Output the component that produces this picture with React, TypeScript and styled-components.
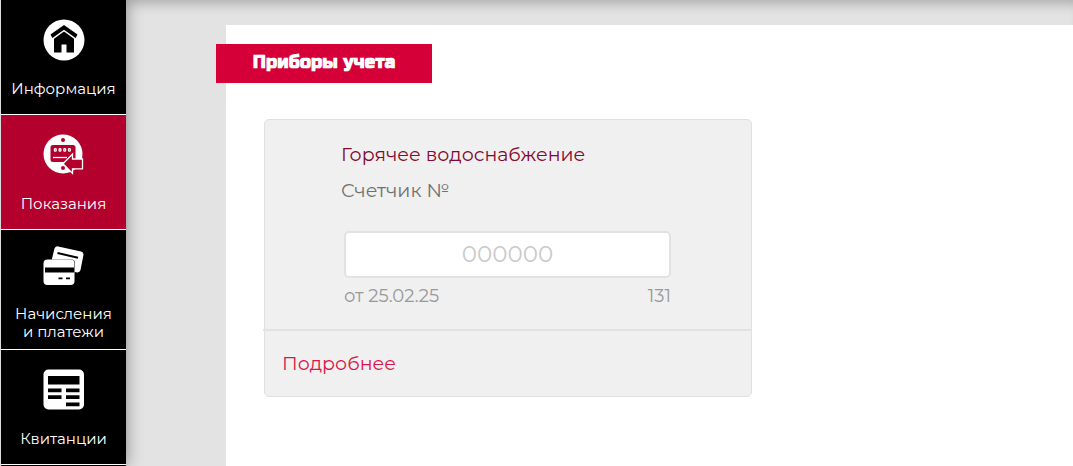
import React from "react";
import styled, { createGlobalStyle, css } from "styled-components";

const GlobalStyle = createGlobalStyle`
  *, *::before, *::after { box-sizing: border-box; }
  body {
    margin: 0;
    background: #e3e3e3;
    font-family: Montserrat, Inter, "Open Sans", sans-serif;
  }
`;

const Page = styled.div`
  display: flex;
  min-height: 100vh;
  overflow: hidden;
`;

const Sidebar = styled.nav`
  flex: none;
  width: 126px;
  border-left: 1px solid #dcdcdc;
  background: #000;
  box-shadow: 0 0 16px rgba(0, 0, 0, 0.4);
`;

const NavItem = styled.a<{ $active?: boolean; $tall?: boolean }>`
  display: flex;
  flex-direction: column;
  align-items: center;
  gap: 19px;
  padding: 19px 4px 16px;
  border-bottom: 1px solid #fff;
  background: ${(p) => (p.$active ? "#b3002d" : "#000")};
  color: #fff;
  font-size: 15px;
  line-height: 18px;
  text-align: center;
  text-decoration: none;
  white-space: pre-line;
  ${(p) =>
    p.$tall &&
    css`
      gap: 18px;
      padding: 15px 4px 8px;
    `}
`;

const Icon = styled.svg`
  display: block;
  width: 42px;
  height: 42px;
`;

const Main = styled.main`
  flex: 1;
  display: flex;
  min-width: 0;
  padding: 25px 0 0 100px;
  box-shadow: inset 0 12px 12px -8px rgba(0, 0, 0, 0.24);
`;

const Panel = styled.section`
  flex: 1;
  padding: 19px 38px 40px;
  background: #fff;
`;

const Title = styled.h1`
  width: 216px;
  margin: 0 0 36px -48px;
  background: #d50037;
  color: #fff;
  font-family: "Russo One", "Open Sans", sans-serif;
  font-size: 18px;
  font-weight: 700;
  line-height: 37px;
  padding-bottom: 2px;
  text-align: center;
`;

const Card = styled.article`
  max-width: 488px;
  border: 1px solid #e0e0e0;
  border-radius: 5px;
  background: #f0f0f0;
`;

const CardBody = styled.div`
  padding: 23px 80px 21px 76px;
`;

const MeterName = styled.h2`
  margin: 0;
  color: #83092f;
  font-size: 19px;
  font-weight: 400;
  line-height: 24px;
`;

const MeterNumber = styled.p`
  margin: 12px 0 28px;
  color: #707070;
  font-size: 19px;
  line-height: 24px;
`;

const Reading = styled.div`
  margin-left: 3px;
`;

const ReadingInput = styled.input`
  display: block;
  width: 100%;
  height: 47px;
  padding: 0 0 2px;
  border: 2px solid #e2e2e2;
  border-radius: 5px;
  background: #fff;
  color: #555;
  font: inherit;
  font-size: 23px;
  text-align: center;
  &::placeholder {
    color: #c9c9c9;
    opacity: 1;
  }
`;

const Previous = styled.div`
  display: flex;
  justify-content: space-between;
  margin-top: 6px;
  color: #999;
  font-size: 18px;
  line-height: 24px;
`;

const CardFooter = styled.div`
  margin-left: -2px;
  padding: 20px 19px;
  border-top: 2px solid #e2e2e2;
`;

const MoreLink = styled.a`
  display: block;
  color: #d9174a;
  font-size: 19px;
  line-height: 25px;
  text-decoration: none;
`;

const HomeIcon = () => (
  <Icon viewBox="0 0 42 42" aria-hidden="true">
    <circle cx="21" cy="21" r="20.5" fill="#fff" />
    <path d="M21 6 34.5 15.6 32.6 19 21 10.8 9.4 19 7.5 15.6z" fill="#000" />
    <path d="M21 12.6 31 19.7V33.5H23.5V25.5H18.5V33.5H11V19.7z" fill="#000" />
  </Icon>
);

const MeterIcon = () => (
  <Icon viewBox="0 0 42 42" aria-hidden="true">
    <circle cx="20" cy="20" r="19.5" fill="#fff" />
    <circle cx="20" cy="6" r="2" fill="#b3002d" />
    <circle cx="20" cy="34" r="2" fill="#b3002d" />
    <rect x="7.5" y="11" width="25" height="17" rx="2.5" fill="#b3002d" />
    <g fill="none" stroke="#fff" strokeWidth="1.3">
      <rect x="11.4" y="14.6" width="1.8" height="2.6" rx=".8" />
      <rect x="16.1" y="14.6" width="1.8" height="2.6" rx=".8" />
      <rect x="20.8" y="14.6" width="1.8" height="2.6" rx=".8" />
      <rect x="25.5" y="14.6" width="1.8" height="2.6" rx=".8" />
      <path d="M10 23.5H24" />
    </g>
    <path
      d="M20 29.8 29.5 20.2V25H39.5V34.8H29.5V39.5z"
      fill="#b3002d"
      stroke="#fff"
      strokeWidth="1.3"
    />
  </Icon>
);

const CardsIcon = () => (
  <Icon viewBox="0 0 42 42" aria-hidden="true">
    <path
      d="M8.8 14.5 11.4 3.8Q12.2 .8 15.2 1.4L38 6.6Q41 7.4 40.4 10.3L37.5 25Q36.8 27.6 34.2 27.4L32 27V18Q31.8 15 28.5 14.6z"
      fill="#fff"
    />
    <path d="M14.5 8 35 12.8" stroke="#000" strokeWidth="2" />
    <rect x=".5" y="14.5" width="31" height="25.5" rx="4" fill="#fff" />
    <rect x="2" y="22.5" width="29" height="5" fill="#000" />
    <path d="M15.5 33.3H19.5M23 33.3H27" stroke="#000" strokeWidth="1.8" />
  </Icon>
);

const ReceiptIcon = () => (
  <Icon viewBox="0 0 42 42" aria-hidden="true">
    <rect x=".5" y=".5" width="40.5" height="40" rx="5" fill="#fff" />
    <path
      d="M5 7H36.5V15.5H5zM5 19.5H18.5V23.3H5zM23 19.5H36.5V23.3H23zM5 26.3H18.5V30H5zM23 26.3H36.5V30H23zM23 33.5H36.5V37.3H23z"
      fill="#000"
    />
  </Icon>
);

export default function App() {
  return (
    <>
      <GlobalStyle />
      <Page>
        <Sidebar>
          <NavItem href="#info">
            <HomeIcon />
            Информация
          </NavItem>
          <NavItem href="#readings" $active aria-current="page">
            <MeterIcon />
            Показания
          </NavItem>
          <NavItem href="#payments" $tall>
            <CardsIcon />
            {"Начисления\nи платежи"}
          </NavItem>
          <NavItem href="#receipts">
            <ReceiptIcon />
            Квитанции
          </NavItem>
        </Sidebar>
        <Main>
          <Panel>
            <Title>Приборы учета</Title>
            <Card>
              <CardBody>
                <MeterName>Горячее водоснабжение</MeterName>
                <MeterNumber>Счетчик №</MeterNumber>
                <Reading>
                  <ReadingInput
                    type="text"
                    inputMode="numeric"
                    placeholder="000000"
                    aria-label="Горячее водоснабжение"
                  />
                  <Previous>
                    <span>от 25.02.25</span>
                    <span>131</span>
                  </Previous>
                </Reading>
              </CardBody>
              <CardFooter>
                <MoreLink href="#details">Подробнее</MoreLink>
              </CardFooter>
            </Card>
          </Panel>
        </Main>
      </Page>
    </>
  );
}
